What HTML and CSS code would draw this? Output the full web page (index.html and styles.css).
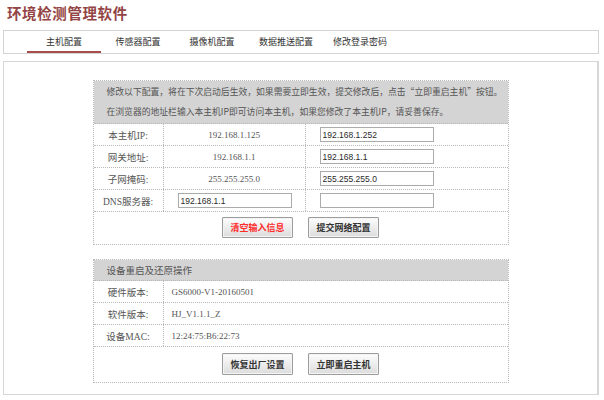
FILE: index.html
```html
<!DOCTYPE html>
<html lang="zh-CN">
<head>
<meta charset="utf-8">
<title>环境检测管理软件</title>
<link rel="stylesheet" href="styles.css">
</head>
<body>
<div class="title">环境检测管理软件</div>
<div class="nav">
  <a class="tab active">主机配置</a>
  <a class="tab">传感器配置</a>
  <a class="tab">摄像机配置</a>
  <a class="tab">数据推送配置</a>
  <a class="tab">修改登录密码</a>
</div>
<div class="main">
  <div class="panel">
    <div class="panel-head two">
      <p>修改以下配置，将在下次启动后生效，如果需要立即生效，提交修改后，点击“立即重启主机”按钮。</p>
      <p>在浏览器的地址栏输入本主机IP即可访问本主机，如果您修改了本主机IP，请妥善保存。</p>
    </div>
    <div class="row net">
      <div class="cell label">本主机IP:</div>
      <div class="cell value">192.168.1.125</div>
      <div class="cell field"><input class="inp" type="text" value="192.168.1.252"></div>
    </div>
    <div class="row net">
      <div class="cell label">网关地址:</div>
      <div class="cell value">192.168.1.1</div>
      <div class="cell field"><input class="inp" type="text" value="192.168.1.1"></div>
    </div>
    <div class="row net">
      <div class="cell label">子网掩码:</div>
      <div class="cell value">255.255.255.0</div>
      <div class="cell field"><input class="inp" type="text" value="255.255.255.0"></div>
    </div>
    <div class="row net">
      <div class="cell label">DNS服务器:</div>
      <div class="cell field"><input class="inp" type="text" value="192.168.1.1"></div>
      <div class="cell field"><input class="inp" type="text" value=""></div>
    </div>
    <div class="actions first">
      <button class="btn red" type="button">清空输入信息</button>
      <button class="btn" type="button">提交网络配置</button>
    </div>
  </div>

  <div class="panel second">
    <div class="panel-head one">设备重启及还原操作</div>
    <div class="row info">
      <div class="cell label">硬件版本:</div>
      <div class="cell text">GS6000-V1-20160501</div>
    </div>
    <div class="row info">
      <div class="cell label">软件版本:</div>
      <div class="cell text">HJ_V1.1.1_Z</div>
    </div>
    <div class="row info">
      <div class="cell label">设备MAC:</div>
      <div class="cell text">12:24:75:B6:22:73</div>
    </div>
    <div class="actions last">
      <button class="btn" type="button">恢复出厂设置</button>
      <button class="btn" type="button">立即重启主机</button>
    </div>
  </div>
</div>
</body>
</html>
```

FILE: styles.css
```css
html, body {
  margin: 0;
  padding: 0;
  background: #ffffff;
}

body {
  font-family: "Liberation Serif", "Noto Sans CJK SC", serif;
  color: #555555;
}

.title {
  height: 30px;
  box-sizing: border-box;
  padding: 3px 0 0 7px;
  font-family: "Noto Sans CJK SC", sans-serif;
  font-weight: 700;
  font-size: 14.5px;
  line-height: 19px;
  color: #934545;
  letter-spacing: 0.6px;
}

.nav {
  margin: 0 5px 0 3px;
  height: 24px;
  box-sizing: border-box;
  border: 1px solid #d4d4d4;
  display: flex;
  padding-left: 23px;
}

.tab {
  width: 74px;
  height: 22px;
  line-height: 22px;
  text-align: center;
  font-family: "Noto Sans CJK SC", sans-serif;
  font-size: 9px;
  color: #333333;
}

.tab.active {
  box-shadow: inset 0 -2px 0 #a84c4c;
}

.main {
  margin: 7px 5px 0 3px;
  border: 1px solid #d6d6d6;
  border-right-width: 2px;
  padding: 18px 0 11px;
}

.panel {
  width: 416px;
  margin: 0 auto;
  border: 1px dotted #b8b8b8;
  box-sizing: border-box;
}

.panel.second {
  margin-top: 14px;
}

.panel-head {
  background: #d4d4d4;
  border-bottom: 1px dotted #b8b8b8;
  padding: 0 13px;
  font-family: "Noto Sans CJK SC", sans-serif;
  color: #555555;
}

.panel-head.two {
  padding-top: 1px;
  padding-bottom: 1px;
  font-size: 8.8px;
  line-height: 20px;
}

.panel-head.two p {
  margin: 0;
  white-space: nowrap;
}

.panel-head.one {
  font-size: 9.5px;
  line-height: 20px;
}

.row {
  display: grid;
  height: 22px;
  box-sizing: border-box;
  border-bottom: 1px dotted #b8b8b8;
}

.row.net {
  grid-template-columns: 70px 142px 1fr;
}

.row.info {
  grid-template-columns: 70px 1fr;
}

.cell {
  display: flex;
  align-items: center;
  font-size: 9px;
  color: #555555;
  border-right: 1px dotted #b8b8b8;
}

.cell:last-child {
  border-right: none;
}

.label {
  justify-content: center;
  font-size: 9.5px;
}

.value {
  justify-content: center;
}

.text {
  padding-left: 8px;
}

.field {
  padding-left: 14px;
}

.inp {
  width: 114px;
  height: 15px;
  box-sizing: border-box;
  margin: 0;
  padding: 0 2px;
  border: 1px solid #ababab;
  border-radius: 0;
  background: #ffffff;
  font-family: "Liberation Sans", Arial, sans-serif;
  font-size: 8.5px;
  color: #2a2a2a;
  outline: none;
}

.actions {
  display: flex;
  justify-content: center;
  gap: 15px;
}

.actions.first {
  padding: 5px 0 6px;
}

.actions.last {
  padding: 6px 0 7px;
}

.btn {
  width: 71px;
  height: 21px;
  margin: 0;
  padding: 0;
  border: 1px solid #9c9c9c;
  border-radius: 1px;
  background: linear-gradient(#fdfdfd, #dcdcdc);
  box-shadow: inset 0 0 0 1px #f4f4f4;
  font-family: "Noto Sans CJK SC", sans-serif;
  font-weight: 700;
  font-size: 9px;
  color: #333333;
}

.actions.last .btn {
  height: 22px;
}

.btn.red {
  color: #ff2b2b;
}
```
